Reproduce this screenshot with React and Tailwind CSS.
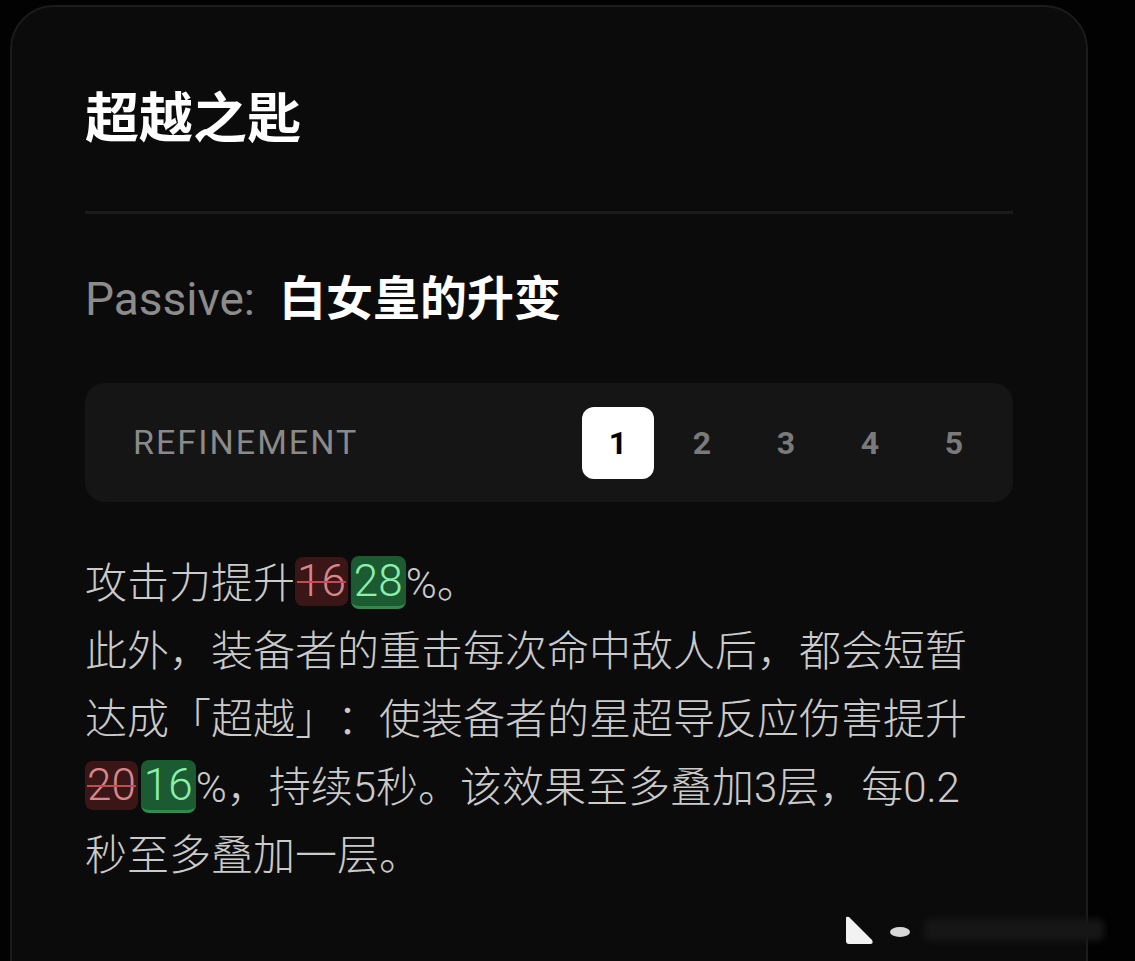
import React from "react";

const sans = { fontFamily: '"Roboto", "Noto Sans CJK SC", sans-serif' };

function Old({ children }) {
  return (
    <span className="inline-block rounded-[8px] bg-[#3a1616] px-[2px] text-[44px] leading-[49px] align-[2px] text-[#d8858b] line-through decoration-[#c24c55] decoration-2">
      {children}
    </span>
  );
}

function New({ children }) {
  return (
    <span className="ml-[3px] inline-block rounded-[8px] border-b-[3px] border-[#2f8a4c] bg-[#1c5a31] px-[3px] text-[44px] leading-[50px] align-[2px] text-[#8bf0ad]">
      {children}
    </span>
  );
}

export default function App() {
  const levels = [1, 2, 3, 4, 5];

  return (
    <div className="min-h-[961px] overflow-hidden bg-[#020202] pl-[10px] pt-[5px]" style={sans}>
      <div className="relative h-[1000px] w-[1078px] rounded-[44px] border-2 border-[#1c1c1c] bg-[#0b0b0b] px-[73px] pt-[82px]">
        <h1 className="text-[54px] font-bold leading-[62px] text-white">超越之匙</h1>

        <div className="mt-[60px] h-[3px] w-[928px] bg-[#1b1b1b]" />

        <div className="mt-[57px] flex items-center leading-[56px]">
          <span className="text-[46px] text-[#8c8c8c]">Passive:</span>
          <span className="ml-[24px] text-[47px] font-bold text-white">白女皇的升变</span>
        </div>

        <div className="mt-[56px] flex h-[119px] w-[928px] items-center justify-between rounded-[20px] bg-[#151515] pl-[48px] pr-[23px]">
          <span className="text-[34px] tracking-[0.06em] text-[#8a8a8a]">REFINEMENT</span>
          <div className="flex gap-[12px]">
            {levels.map((n) => (
              <div
                key={n}
                className={
                  n === 1
                    ? "flex h-[72px] w-[72px] items-center justify-center rounded-[12px] bg-white text-[32px] font-bold text-black"
                    : "flex h-[72px] w-[72px] items-center justify-center rounded-[12px] text-[32px] font-bold text-[#7a7a7a]"
                }
              >
                {n}
              </div>
            ))}
          </div>
        </div>

        <p className="mt-[48px] max-w-[905px] text-[42px] font-light leading-[68px] text-[#cbcbcb] [text-spacing-trim:space-all]">
          攻击力提升<Old>16</Old><New>28</New>%。
          <br />
          此外，装备者的重击每次命中敌人后，都会短暂达成「超越」：使装备者的星超导反应伤害提升
          <br />
          <Old>20</Old><New>16</New>%，持续5秒。该效果至多叠加3层，每0.2
          <br />
          秒至多叠加一层。
        </p>

        <div className="absolute left-[830px] top-[905px] flex items-center gap-[8px]">
          <svg width="36" height="36" viewBox="0 0 36 36">
            <path d="M4 6 Q4 4 7 5 L30 28 Q32 32 28 32 L7 32 Q4 32 4 29 Z" fill="#f2f2f2" />
          </svg>
          <svg width="30" height="20" viewBox="0 0 30 20">
            <ellipse cx="14" cy="12" rx="10" ry="5" fill="#d8d8d8" />
          </svg>
          <div className="h-[22px] w-[180px] rounded-[6px] bg-[#161616] blur-[3px]" />
        </div>
      </div>
    </div>
  );
}
